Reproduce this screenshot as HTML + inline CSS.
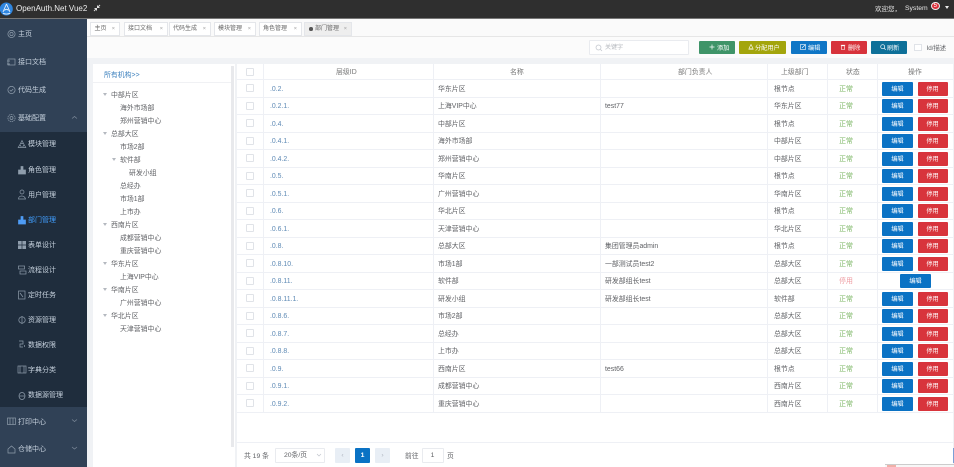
<!DOCTYPE html>
<html lang="zh"><head><meta charset="utf-8"><title>部门管理</title>
<style>
*{box-sizing:border-box}
html,body{margin:0;padding:0}
html{background:#f0f2f5}
body{position:relative;width:954px;height:467px;overflow:hidden;background:#f0f2f5;font-family:"Liberation Sans","Noto Sans CJK SC",sans-serif;font-size:6.9px;color:#606266;filter:blur(.3px)}
div,span,svg{position:absolute}
.t{white-space:nowrap;line-height:12px;height:12px}
.top{position:absolute;left:18px;margin-top:1px;color:#c6d1dd;font-size:7px;line-height:12px;white-space:nowrap}
.sub{position:absolute;left:28px;margin-top:1px;color:#c6d1dd;font-size:7px;line-height:12px;white-space:nowrap}
.tab{top:22px;height:13.500px;background:#fff;border:1px solid #e4e6ea;font-size:6px;line-height:12px;color:#666;padding-left:3.500px;white-space:nowrap}
.tab i{font-style:normal;position:absolute;right:4px;top:0;color:#999;font-size:5.500px}
.bt{top:40.700px;height:13.600px;color:#fff;font-size:6.200px;line-height:13.600px;border-radius:1px;white-space:nowrap}
.bt span{top:1.300px}
.bt svg{top:3.800px}
.tr{left:111px;margin-top:1.500px;color:#606266;font-size:6.900px;line-height:12px;white-space:nowrap}
.ar{width:0;height:0;border-left:2.500px solid transparent;border-right:2.500px solid transparent;border-top:3px solid #b4b8bf}
.row{left:237px;width:716px;height:17.500px;border-bottom:1px solid #eef0f5;background:#fff}
.row span{top:3.500px;line-height:12px;white-space:nowrap;font-size:6.900px;color:#606266}
.row .cb{left:9px;top:4px;width:8px;height:8px;border:1px solid #e0e3e8;border-radius:1px;background:#fff}
.row .id{left:33px;color:#5e8ab5}
.row .n{left:201px}
.row .l{left:368px}
.row .p{left:537px}
.row .s{left:598px;width:22px;text-align:center;color:#7ab562}
.row .s.off{color:#ee9aa0}
.row .e,.row .d{top:1.800px;height:14px;line-height:16px;width:31px;text-align:center;color:#fff;font-size:6.200px;border-radius:1px;background:#0a72c4}
.row .e{left:645px}
.row .d{left:680.500px;width:30px;background:#d8343c}
.row .e.c{left:663px}
.v{top:64px;width:1px;height:349px;background:#eef0f5}
.pg{top:448px;height:14.500px;border-radius:1px;line-height:16px;text-align:center;font-size:6.800px}
</style></head><body>

<!-- header -->
<div style="left:0;top:0;width:954px;height:19px;background:#2f2f2f;border-bottom:1px solid #777"></div>
<svg style="left:0;top:1px" width="14" height="16" viewBox="0 0 14 16"><circle cx="6.300" cy="8" r="6.500" fill="#2f86e0"/><path d="M6.500 3L3 11M6.500 3L10 11M4.500 9.500Q6.500 7 8.500 9.500M3 12.200Q6.500 14 10 12.200" stroke="#e8f2fc" stroke-width=".9" fill="none"/></svg>
<div class="t" style="left:16px;top:3px;color:#eee;font-size:8px">OpenAuth.Net Vue2</div>
<svg style="left:93px;top:4px" width="8" height="8" viewBox="0 0 8 8"><path d="M7 1L4.800 3.200M4.500 1.500V3.500H6.500M1 7L3.200 4.800M1.500 4.500H3.500V6.500" stroke="#ddd" stroke-width="1" fill="none"/></svg>
<div class="t" style="left:875px;top:3.500px;color:#e8e8e8;font-size:6.500px">欢迎您，</div>
<div class="t" style="left:905px;top:3px;color:#e8e8e8;font-size:6.800px">System</div>
<div style="left:930.500px;top:1.500px;width:9.500px;height:8.500px;border-radius:50%;background:#d9303a;border:1px solid #eee;color:#fff;font-size:6px;line-height:6.500px;text-align:center">5</div>
<div style="left:945px;top:6px;width:0;height:0;border-left:2.800px solid transparent;border-right:2.800px solid transparent;border-top:3px solid #eee"></div>

<!-- sidebar -->
<div style="left:0;top:19px;width:87px;height:448px;background:#304156"></div>
<div style="left:0;top:132px;width:87px;height:275px;background:#1f2d3d"></div>
<svg style="left:7px;top:29px" width="10" height="130" viewBox="0 0 10 130" fill="none" stroke="#8f9dac" stroke-width=".7"><circle cx="4.500" cy="5" r="3.600"/><circle cx="4.500" cy="5" r="1.600"/><rect x="1" y="30" width="7" height="6"/><path d="M0 32h3M0 35h3"/><circle cx="4.500" cy="61" r="3.600"/><path d="M2.800 61l1.200 1.300 2.200-2.300"/><circle cx="4.500" cy="89" r="1.500"/><circle cx="4.500" cy="89" r="3.600" stroke-dasharray="1.400 .6"/></svg>
<div class="top" style="top:28px">主页</div>
<div class="top" style="top:56px">接口文档</div>
<div class="top" style="top:84px">代码生成</div>
<div class="top" style="top:112px">基础配置</div>
<svg style="left:71px;top:115px" width="7" height="5"><path d="M1 3.500L3.500 1.500L6 3.500" stroke="#7d8a9a" fill="none" stroke-width=".7"/></svg>
<svg style="left:17px;top:139px" width="10" height="265" viewBox="0 0 10 265" fill="none" stroke="#8f9dac" stroke-width=".7">
<path d="M5 1.500L6.500 4.500H3.500ZM3 5.500L4.500 8.500H1.200ZM7 5.500L8.800 8.500H5.500Z"/>
<path d="M1.500 35h7v-4h-7zM4 27.500h2v3.500H4z" fill="#8f9dac"/>
<circle cx="5" cy="53" r="2"/><path d="M1.500 60c0-4 6-4 7 0z"/>
<path d="M1.500 85h7v-4h-7zM4 77.500h2v3.500H4z" fill="#4e9cf5" stroke="#4e9cf5"/>
<rect x="1" y="102" width="8" height="8" fill="#8f9dac" stroke="none"/><path d="M5 102v8M1 106h8" stroke="#1f2d3d"/>
<rect x="1.500" y="127" width="6" height="3"/><rect x="3" y="132" width="6" height="3"/>
<rect x="1.500" y="152" width="6.500" height="8"/><path d="M3 154l3 4"/>
<circle cx="5" cy="181" r="3.200"/><path d="M5 177v8"/>
<path d="M2 202h4v3H3v3h3M7.500 206v2"/>
<rect x="1" y="227" width="8" height="7"/><path d="M3 227v7M7 227v7"/>
<ellipse cx="5" cy="257" rx="3" ry="3.500"/><path d="M2 257h6"/>
</svg>
<div class="sub" style="top:138px">模块管理</div>
<div class="sub" style="top:163.500px">角色管理</div>
<div class="sub" style="top:188.500px">用户管理</div>
<div class="sub" style="top:213.500px;color:#409eff">部门管理</div>
<div class="sub" style="top:239px">表单设计</div>
<div class="sub" style="top:264px">流程设计</div>
<div class="sub" style="top:289px">定时任务</div>
<div class="sub" style="top:314px">资源管理</div>
<div class="sub" style="top:339px">数据权限</div>
<div class="sub" style="top:364px">字典分类</div>
<div class="sub" style="top:389px">数据源管理</div>
<svg style="left:7px;top:417px" width="10" height="38" viewBox="0 0 10 38" fill="none" stroke="#8f9dac" stroke-width=".7"><rect x=".5" y="1" width="8" height="6.500"/><path d="M3 1v6.500M6 1v6.500"/><path d="M1 32l3.500-3 3.500 3v4H1z"/></svg>
<div class="top" style="top:415.500px">打印中心</div>
<div class="top" style="top:443px">仓储中心</div>
<svg style="left:71px;top:418px" width="7" height="34"><path d="M1 1.500L3.500 3.500L6 1.500M1 29L3.500 31L6 29" stroke="#7d8a9a" fill="none" stroke-width=".7"/></svg>

<!-- tabs -->
<div style="left:87px;top:19px;width:867px;height:18px;background:#fafafa;border-bottom:1px solid #e6e6e6"></div>
<div class="tab" style="left:90px;width:30px">主页<i>×</i></div>
<div class="tab" style="left:123.500px;width:44.500px">接口文档<i>×</i></div>
<div class="tab" style="left:168.500px;width:42.500px">代码生成<i>×</i></div>
<div class="tab" style="left:213.500px;width:42.500px">模块管理<i>×</i></div>
<div class="tab" style="left:258.500px;width:43.500px">角色管理<i>×</i></div>
<div class="tab" style="left:304px;width:48px;background:#eee"><span style="left:4px;top:4px;width:3.500px;height:3.500px;border-radius:50%;background:#555"></span><span style="left:10px;top:0">部门管理</span><i>×</i></div>

<!-- toolbar -->
<div style="left:87px;top:37px;width:867px;height:21px;background:#fbfbfb"></div>
<div style="left:589px;top:39.500px;width:100px;height:15px;background:#fff;border:1px solid #e9ebef;border-radius:1px"></div>
<svg style="left:595px;top:44px" width="8" height="8"><circle cx="3.500" cy="3.500" r="2.500" fill="none" stroke="#c0c4cc" stroke-width=".7"/><path d="M5.500 5.500L7 7" stroke="#c0c4cc" stroke-width=".7"/></svg>
<div class="t" style="left:605px;top:42px;color:#b5b8be;font-size:6px">关键字</div>
<div class="bt" style="left:699px;width:36px;background:#3f9468"><svg style="left:9.500px" width="6" height="6"><path d="M3 .5v5M.5 3h5" stroke="#fff" stroke-width=".7"/></svg><span style="left:18px">添加</span></div>
<div class="bt" style="left:739px;width:47px;background:#a3a50c"><svg style="left:9px" width="6" height="6"><path d="M3 .5L5 4.500H1zM.5 5.500h5" stroke="#fff" stroke-width=".6" fill="none"/></svg><span style="left:16px">分配用户</span></div>
<div class="bt" style="left:791px;width:36px;background:#0f76c6"><svg style="left:9px" width="6" height="6"><rect x=".5" y=".5" width="5" height="5" fill="none" stroke="#fff" stroke-width=".6"/><path d="M2 4L5 1" stroke="#fff" stroke-width=".6"/></svg><span style="left:17px">编辑</span></div>
<div class="bt" style="left:831px;width:36px;background:#d7323b"><svg style="left:9px" width="6" height="6"><path d="M1.500 1.800h3V5.500h-3zM.8 1.200h4.400" stroke="#fff" stroke-width=".6" fill="none"/></svg><span style="left:17px">删除</span></div>
<div class="bt" style="left:871px;width:36px;background:#0e7099"><svg style="left:8.500px" width="6" height="6"><circle cx="2.700" cy="2.700" r="2" fill="none" stroke="#fff" stroke-width=".7"/><path d="M4.200 4.200L5.700 5.700" stroke="#fff" stroke-width=".7"/></svg><span style="left:16px">刷新</span></div>
<div style="left:914px;top:43.500px;width:7.500px;height:7.500px;border:1px solid #e0e3e8;background:#fff"></div>
<div class="t" style="left:926.500px;top:42.500px;font-size:6.300px;color:#606266">Id/描述</div>

<!-- tree panel -->
<div style="left:93px;top:64px;width:142px;height:403px;background:#fff"></div>
<div style="left:93px;top:82px;width:138px;height:1px;background:#f0f1f4"></div>
<div class="t" style="left:104px;top:69.500px;font-size:6.900px;color:#3a7fbd">所有机构&gt;&gt;</div>
<div style="left:231px;top:66px;width:3px;height:381px;background:#e8e9ec"></div>
<div class="ar" style="left:103px;top:93px"></div>
<div class="ar" style="left:103px;top:132px"></div>
<div class="ar" style="left:112px;top:158px"></div>
<div class="ar" style="left:103px;top:223px"></div>
<div class="ar" style="left:103px;top:262px"></div>
<div class="ar" style="left:103px;top:288px"></div>
<div class="ar" style="left:103px;top:314px"></div>
<div class="tr" style="top:88px">中部片区</div>
<div class="tr" style="top:101px;left:120px">海外市场部</div>
<div class="tr" style="top:114px;left:120px">郑州营销中心</div>
<div class="tr" style="top:127px">总部大区</div>
<div class="tr" style="top:140px;left:120px">市场2部</div>
<div class="tr" style="top:153px;left:120px">软件部</div>
<div class="tr" style="top:166px;left:129px">研发小组</div>
<div class="tr" style="top:179px;left:120px">总经办</div>
<div class="tr" style="top:192px;left:120px">市场1部</div>
<div class="tr" style="top:205px;left:120px">上市办</div>
<div class="tr" style="top:218px">西南片区</div>
<div class="tr" style="top:231px;left:120px">成都营销中心</div>
<div class="tr" style="top:244px;left:120px">重庆营销中心</div>
<div class="tr" style="top:257px">华东片区</div>
<div class="tr" style="top:270px;left:120px">上海VIP中心</div>
<div class="tr" style="top:283px">华南片区</div>
<div class="tr" style="top:296px;left:120px">广州营销中心</div>
<div class="tr" style="top:309px">华北片区</div>
<div class="tr" style="top:322px;left:120px">天津营销中心</div>

<!-- table -->
<div style="left:237px;top:64px;width:716px;height:403px;background:#fff"></div>
<div class="row" style="top:64px;height:16px">
<span class="cb" style="top:4px"></span>
<span style="left:99px;top:3px;color:#777">层级ID</span><span style="left:273px;top:3px;color:#777">名称</span><span style="left:441px;top:3px;color:#777">部门负责人</span><span style="left:544px;top:3px;color:#777">上级部门</span><span style="left:609px;top:3px;color:#777">状态</span><span style="left:671px;top:3px;color:#777">操作</span>
</div>
<div class="row" style="top:80px"><span class="cb"></span><span class="id">.0.2.</span><span class="n">华东片区</span><span class="p">根节点</span><span class="s">正常</span><span class="e">编辑</span><span class="d">停用</span></div>
<div class="row" style="top:97.500px"><span class="cb"></span><span class="id">.0.2.1.</span><span class="n">上海VIP中心</span><span class="l">test77</span><span class="p">华东片区</span><span class="s">正常</span><span class="e">编辑</span><span class="d">停用</span></div>
<div class="row" style="top:115px"><span class="cb"></span><span class="id">.0.4.</span><span class="n">中部片区</span><span class="p">根节点</span><span class="s">正常</span><span class="e">编辑</span><span class="d">停用</span></div>
<div class="row" style="top:132.500px"><span class="cb"></span><span class="id">.0.4.1.</span><span class="n">海外市场部</span><span class="p">中部片区</span><span class="s">正常</span><span class="e">编辑</span><span class="d">停用</span></div>
<div class="row" style="top:150px"><span class="cb"></span><span class="id">.0.4.2.</span><span class="n">郑州营销中心</span><span class="p">中部片区</span><span class="s">正常</span><span class="e">编辑</span><span class="d">停用</span></div>
<div class="row" style="top:167.500px"><span class="cb"></span><span class="id">.0.5.</span><span class="n">华南片区</span><span class="p">根节点</span><span class="s">正常</span><span class="e">编辑</span><span class="d">停用</span></div>
<div class="row" style="top:185px"><span class="cb"></span><span class="id">.0.5.1.</span><span class="n">广州营销中心</span><span class="p">华南片区</span><span class="s">正常</span><span class="e">编辑</span><span class="d">停用</span></div>
<div class="row" style="top:202.500px"><span class="cb"></span><span class="id">.0.6.</span><span class="n">华北片区</span><span class="p">根节点</span><span class="s">正常</span><span class="e">编辑</span><span class="d">停用</span></div>
<div class="row" style="top:220px"><span class="cb"></span><span class="id">.0.6.1.</span><span class="n">天津营销中心</span><span class="p">华北片区</span><span class="s">正常</span><span class="e">编辑</span><span class="d">停用</span></div>
<div class="row" style="top:237.500px"><span class="cb"></span><span class="id">.0.8.</span><span class="n">总部大区</span><span class="l">集团管理员admin</span><span class="p">根节点</span><span class="s">正常</span><span class="e">编辑</span><span class="d">停用</span></div>
<div class="row" style="top:255px"><span class="cb"></span><span class="id">.0.8.10.</span><span class="n">市场1部</span><span class="l">一部测试员test2</span><span class="p">总部大区</span><span class="s">正常</span><span class="e">编辑</span><span class="d">停用</span></div>
<div class="row" style="top:272.500px"><span class="cb"></span><span class="id">.0.8.11.</span><span class="n">软件部</span><span class="l">研发部组长test</span><span class="p">总部大区</span><span class="s off">停用</span><span class="e c">编辑</span></div>
<div class="row" style="top:290px"><span class="cb"></span><span class="id">.0.8.11.1.</span><span class="n">研发小组</span><span class="l">研发部组长test</span><span class="p">软件部</span><span class="s">正常</span><span class="e">编辑</span><span class="d">停用</span></div>
<div class="row" style="top:307.500px"><span class="cb"></span><span class="id">.0.8.6.</span><span class="n">市场2部</span><span class="p">总部大区</span><span class="s">正常</span><span class="e">编辑</span><span class="d">停用</span></div>
<div class="row" style="top:325px"><span class="cb"></span><span class="id">.0.8.7.</span><span class="n">总经办</span><span class="p">总部大区</span><span class="s">正常</span><span class="e">编辑</span><span class="d">停用</span></div>
<div class="row" style="top:342.500px"><span class="cb"></span><span class="id">.0.8.8.</span><span class="n">上市办</span><span class="p">总部大区</span><span class="s">正常</span><span class="e">编辑</span><span class="d">停用</span></div>
<div class="row" style="top:360px"><span class="cb"></span><span class="id">.0.9.</span><span class="n">西南片区</span><span class="l">test66</span><span class="p">根节点</span><span class="s">正常</span><span class="e">编辑</span><span class="d">停用</span></div>
<div class="row" style="top:377.500px"><span class="cb"></span><span class="id">.0.9.1.</span><span class="n">成都营销中心</span><span class="p">西南片区</span><span class="s">正常</span><span class="e">编辑</span><span class="d">停用</span></div>
<div class="row" style="top:395px"><span class="cb"></span><span class="id">.0.9.2.</span><span class="n">重庆营销中心</span><span class="p">西南片区</span><span class="s">正常</span><span class="e">编辑</span><span class="d">停用</span></div>
<div class="v" style="left:263px"></div>
<div class="v" style="left:433px"></div>
<div class="v" style="left:600px"></div>
<div class="v" style="left:767px"></div>
<div class="v" style="left:827px"></div>
<div class="v" style="left:877px"></div>

<!-- pagination -->
<div style="left:237px;top:442px;width:716px;height:1px;background:#eef0f5"></div>
<div class="t" style="left:244px;top:450.500px;font-size:6.800px;color:#606266">共 19 条</div>
<div class="pg" style="left:275px;width:50px;border:1px solid #e9ebef;text-align:left;padding-left:8px;line-height:14px;color:#606266">20条/页</div>
<svg style="left:316px;top:453px" width="6" height="5"><path d="M1 1L3 3L5 1" stroke="#c0c4cc" fill="none" stroke-width=".7"/></svg>
<div class="pg" style="left:335px;width:15px;background:#e8eef5;color:#b0b6bf">‹</div>
<div class="pg" style="left:355px;width:15px;background:#0a72c4;color:#fff;font-weight:bold">1</div>
<div class="pg" style="left:375px;width:15px;background:#e8eef5;color:#b0b6bf">›</div>
<div class="t" style="left:405px;top:450.500px;font-size:6.800px">前往</div>
<div class="pg" style="left:421.500px;width:22px;border:1px solid #e9ebef;line-height:13px">1</div>
<div class="t" style="left:447px;top:450.500px;font-size:6.800px">页</div>

<!-- bottom-right overlay -->
<div style="left:953px;top:448px;width:1px;height:15px;background:#7b9fd6"></div>
<div style="left:885px;top:464px;width:69px;height:3px;background:#f7f7f7;border-top:1px solid #ccc"></div>
<div style="left:887px;top:465px;width:9px;height:2px;background:#f0b0a8"></div>
</body></html>
